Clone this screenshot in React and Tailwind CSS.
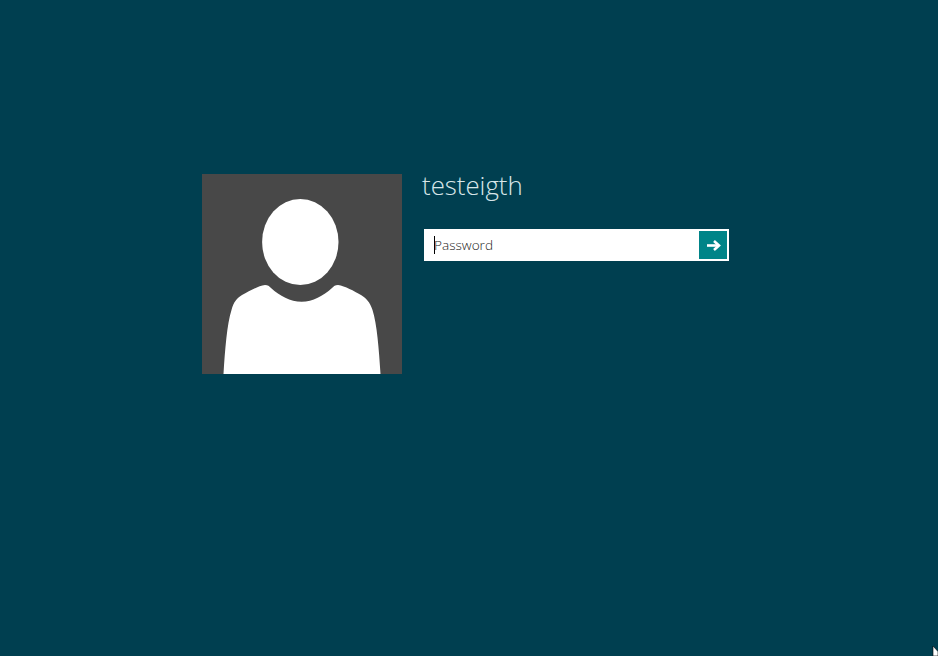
const UserTile = () => (
  <div className="w-[200px] h-[200px] bg-[#484848] shrink-0">
    <svg viewBox="0 0 200 200" className="block w-full h-full">
      <ellipse cx="98.3" cy="68" rx="38.2" ry="43" fill="#fff" />
      <path
        d="M21.5 200 C23 176 25 150 29.5 136 C31.5 128 35 124 40 121 C47 117 56 112 63 111 C66 111 67 112 69 114 C78 122 88 127.7 99.7 127.7 C111 127.7 121 122 130 114 C132 112 133 111 136 111 C143 112 152 117 159 121 C164 124 168 128 170.5 136 C175 150 177 176 178.5 200 Z"
        fill="#fff"
      />
    </svg>
  </div>
);

const App = () => {
  return (
    <div className="relative w-[938px] h-[656px] overflow-hidden bg-[#003f50] font-['Open_Sans',sans-serif]">
      <div className="flex pt-[174px] pl-[202px]">
        <UserTile />
        <div className="ml-[22px]">
          <div className="-ml-[2px] h-[55px] -mt-px mb-px text-[25.8px] leading-[25px] font-light text-[#d8e6e9]">testeigth</div>
          <div className="flex items-center w-[305px] h-[32px] bg-white pl-[10px] pr-[2px]">
            <span className="w-px h-[18px] bg-black" />
            <span className="flex-1 pt-px -ml-px text-[13.6px] font-light text-[#222]">Password</span>
            <div className="flex items-center justify-center w-[28px] h-[28px] bg-[#008488]">
              <svg viewBox="0 0 14 11" className="w-[14px] h-[11px] ml-px mt-px" fill="none" stroke="#fff" strokeWidth="2.6">
                <path d="M0 5.5 H11" />
                <path d="M7 1 L12 5.5 L7 10" />
              </svg>
            </div>
          </div>
        </div>
      </div>
      <svg viewBox="0 0 6 10" className="absolute left-[932px] top-[646px] w-[6px] h-[10px]">
        <path d="M1 0 L6 5.5 V10 H1 Z" fill="#fff" stroke="#000" strokeWidth="0.6" />
      </svg>
    </div>
  );
};

export default App;
